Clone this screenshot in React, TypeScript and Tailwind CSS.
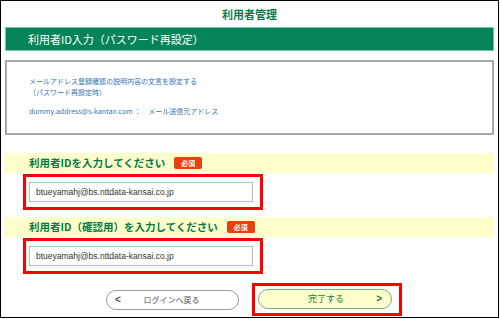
import React from "react";

const jp = { fontFamily: '"Noto Sans CJK JP", "Noto Sans", sans-serif' };

function Badge() {
  return (
    <span className="ml-[9px] inline-flex h-[12px] w-[28px] items-center justify-center rounded-[2px] bg-[#e8400f] text-[7px] font-bold leading-none text-white">
      必須
    </span>
  );
}

function Field({ label }: { label: string }) {
  return (
    <>
      <div className="flex h-[20px] items-center bg-[#ffffcc] pl-[24px]">
        <span className="text-[10.5px] font-bold leading-none text-[#007a46]">{label}</span>
        <Badge />
      </div>
      <div className="ml-[18px] mt-[1px] w-[240px] border-[3px] border-[#ff0000] pb-[5px] pl-[3px] pt-[5px]">
        <div
          className="flex h-[20px] w-[224px] items-center border border-[#a3c9c0] bg-white pl-[6px] text-[8.5px] text-[#333]"
          style={{ fontFamily: '"Liberation Sans", sans-serif' }}
        >
          btueyamahj@bs.nttdata-kansai.co.jp
        </div>
      </div>
    </>
  );
}

export default function App() {
  return (
    <div className="h-[318px] w-[499px] border border-black bg-white px-[4px]" style={jp}>
      <div className="flex h-[26px] items-center justify-center text-[11px] font-bold text-[#0e7a4a]">
        利用者管理
      </div>
      <div className="flex h-[24px] items-center border border-[#7cc2a3] bg-[#048458] pl-[22px] text-[11px] text-white">
        利用者ID入力（パスワード再設定）
      </div>
      <div className="mt-[9px] flex h-[75px] flex-col border-2 border-[#a8a8a8] pl-[22px] pt-[14px] text-[7px] leading-[11px] text-[#3475b5]">
        <div>メールアドレス登録確認の説明内容の文言を設定する</div>
        <div>（パスワード再設定時）</div>
        <div className="mt-[8px]">dummy.address@s-kantan.com ：　メール送信元アドレス</div>
      </div>
      <div className="mt-[18px]">
        <Field label="利用者IDを入力してください" />
      </div>
      <div className="mt-[7px]">
        <Field label="利用者ID（確認用）を入力してください" />
      </div>
      <div className="mt-[9px] flex items-center">
        <div className="ml-[101px] flex h-[20px] w-[133px] items-center rounded-full border border-[#999] bg-white px-[8px] text-[#555]">
          <span className="text-[10px] font-bold leading-none" style={{ fontFamily: '"Liberation Sans", sans-serif' }}>&lt;</span>
          <span className="flex-1 pr-[8px] text-center text-[8px]">ログインへ戻る</span>
        </div>
        <div className="ml-[13px] h-[33px] w-[150px] border-[3px] border-[#ff0000] pl-[3px] pt-[3px]">
          <div className="flex h-[20px] w-[134px] items-center rounded-full border border-[#6db37f] bg-[#ffffcc] px-[9px] text-[#0e7a4a]">
            <span className="flex-1 pl-[8px] text-center text-[9px]">完了する</span>
            <span className="text-[10px] font-bold leading-none text-[#3a6a4a]" style={{ fontFamily: '"Liberation Sans", sans-serif' }}>&gt;</span>
          </div>
        </div>
      </div>
    </div>
  );
}
